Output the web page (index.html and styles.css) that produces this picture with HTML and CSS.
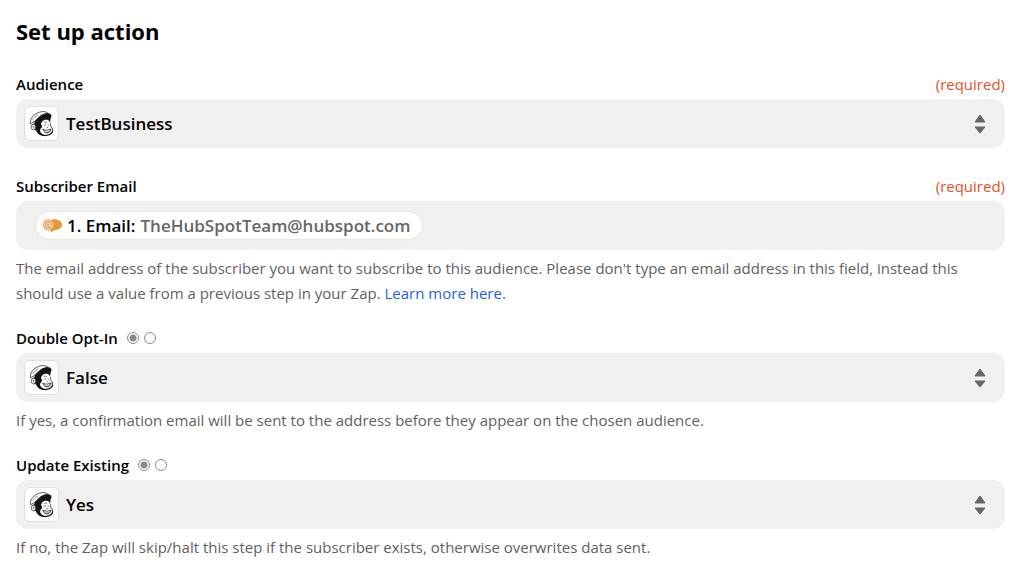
FILE: index.html
```html
<!DOCTYPE html>
<html lang="en">
<head>
<meta charset="utf-8">
<meta name="viewport" content="width=device-width, initial-scale=1">
<title>Set up action</title>
<link rel="stylesheet" href="styles.css">
</head>
<body>
<svg class="sprite" aria-hidden="true">
  <symbol id="monkey" viewBox="1 0 102 102">
    <path fill="#151515" d="M31 42C38 33 48 28 60 26L78 32C81 36 80 42 78 47C81 50 82 55 82 60C87 64 90 72 87 79C82 87 71 91 60 90C48 90 38 82 35 72C27 73 21 68 21 61C20 56 24 52 30 51Z"/>
    <path fill="#fff" d="M53 46C59 38 72 38 76 44C79 49 80 55 80 61C86 66 87 71 84 76C79 84 70 87 62 86C51 84 46 76 48 70C50 64 56 63 53 57C50 54 50 50 53 46Z"/>
    <path fill="#fff" stroke="#333" stroke-width="2.5" d="M18 52C15 35 29 21 46 16C57 12 68 15 73 20C58 21 44 28 33 42C28 47 24 49 18 52Z"/>
    <path fill="#151515" d="M45 31C52 22 67 17 77 20C85 23 84 30 79 36C71 32 59 31 48 37Z"/>
    <ellipse cx="27" cy="62" rx="7" ry="9" fill="#ddd" stroke="#444" stroke-width="2"/>
    <path fill="none" stroke="#666" stroke-width="2" d="M25 61q4-4 4 4M24 39q7-11 18-15"/>
    <path fill="none" stroke="#333" stroke-width="2" d="M60 48q5-3 9 0M59 56q4-2 7 0M71 55l4 1M68 63l5 1"/>
    <path fill="#888" stroke="#151515" stroke-width="2" d="M56 68C64 74 74 71 82 68C80 77 74 80 67 80C61 79 58 74 56 68Z"/>
    <path fill="none" stroke="#fff" stroke-width="3" d="M61 74q8 2 15-1"/>
  </symbol>
</svg>
<main class="panel">
  <h1 class="title">Set up action</h1>
  <form class="form">
    <section class="field">
      <div class="head"><label class="label" for="audience">Audience</label><span class="required">(required)</span></div>
      <div class="control">
        <span class="app"><svg class="art"><use href="#monkey"/></svg></span>
        <select class="select" id="audience"><option>TestBusiness</option></select>
      </div>
    </section>
    <section class="field">
      <div class="head"><label class="label" for="email">Subscriber Email</label><span class="required">(required)</span></div>
      <div class="control token-box">
        <span class="token">
          <svg class="bubble" viewBox="0 0 54 42" aria-hidden="true">
            <path fill="#e8963c" d="M24 5C37 0 54 7 54 19C54 29 43 34 32 34L21 42L23 33C18 30 15 25 15 20C15 14 18 10 24 5Z"/>
            <circle cx="16" cy="19" r="16" fill="#e8963c"/>
            <circle cx="16" cy="19" r="12" fill="none" stroke="#fff" stroke-width="2.5"/>
            <circle cx="15" cy="19" r="5" fill="none" stroke="#fff" stroke-width="2.5"/>
            <path fill="none" stroke="#fff" stroke-width="2.5" d="M20 13v8q3 5 7 1"/>
          </svg>
          <span class="token-name">1. Email:</span>
          <span>TheHubSpotTeam@hubspot.com</span>
        </span>
        <input class="text" id="email" type="text">
      </div>
      <p class="help">The email address of the subscriber you want to subscribe to this audience. Please don't type an email address in this field, instead this should use a value from a previous step in your Zap. <a class="link" href="#">Learn more here.</a></p>
    </section>
    <section class="field">
      <div class="head">
        <label class="label" for="optin">Double Opt-In</label>
        <span class="radios"><input class="radio" type="radio" name="optin-mode" aria-label="Choose value" checked><input class="radio" type="radio" name="optin-mode" aria-label="Custom value"></span>
      </div>
      <div class="control">
        <span class="app"><svg class="art"><use href="#monkey"/></svg></span>
        <select class="select" id="optin"><option>False</option></select>
      </div>
      <p class="help">If yes, a confirmation email will be sent to the address before they appear on the chosen audience.</p>
    </section>
    <section class="field">
      <div class="head">
        <label class="label" for="update">Update Existing</label>
        <span class="radios"><input class="radio" type="radio" name="update-mode" aria-label="Choose value" checked><input class="radio" type="radio" name="update-mode" aria-label="Custom value"></span>
      </div>
      <div class="control">
        <span class="app"><svg class="art"><use href="#monkey"/></svg></span>
        <select class="select" id="update"><option>Yes</option></select>
      </div>
      <p class="help">If no, the Zap will skip/halt this step if the subscriber exists, otherwise overwrites data sent.</p>
    </section>
  </form>
</main>
</body>
</html>
```
FILE: styles.css
```css
* { box-sizing: border-box; }
body {
  margin: 0;
  background: #fff;
  color: #000;
  font-family: "Open Sans", "Noto Sans", sans-serif;
  font-size: 15px;
}
.sprite { display: none; }
.panel { padding: 15px 19px 0 16px; }
.title {
  margin: 0 0 23px;
  font-size: 22px;
  line-height: 32px;
  font-weight: 700;
}
.field { margin-bottom: 24px; }
.field:has(.help) { margin-bottom: 18px; }
.head {
  display: flex;
  align-items: center;
  height: 29px;
  padding-bottom: 2px;
}
.label { font-weight: 600; }
.required { margin-left: auto; color: #e8501f; }
.radios { display: flex; gap: 5px; margin-left: 9px; }
.radio {
  appearance: none;
  width: 12px;
  height: 12px;
  margin: 0;
  border: 1px solid #8c8c8c;
  border-radius: 50%;
  background: #fff;
}
.radio:checked { background: radial-gradient(circle, #888 0 3px, #fff 4px); }
.control {
  display: grid;
  grid-template-columns: 50px 1fr;
  align-items: center;
  height: 49px;
  border-radius: 12px;
  background: #f0f0f0;
}
.app {
  z-index: 1;
  grid-area: 1 / 1;
  display: flex;
  width: 35px;
  height: 35px;
  margin-left: 8px;
  border: 1px solid #dcdfe3;
  border-radius: 6px;
  background: #fff;
  pointer-events: none;
}
.art { width: 100%; height: 100%; }
.select {
  appearance: none;
  grid-area: 1 / 1 / 2 / 3;
  width: 100%;
  height: 100%;
  padding: 0 50px;
  border: 0;
  border-radius: 12px;
  background: url("data:image/svg+xml,%3Csvg xmlns='http://www.w3.org/2000/svg' width='12' height='20' fill='%23666' stroke='%23666' stroke-linejoin='round'%3E%3Cpath d='M6 1l5 7H1zM6 19l5-6H1z'/%3E%3C/svg%3E") right 19px center no-repeat;
  color: #000;
  font: 600 17px "Open Sans", "Noto Sans", sans-serif;
}
.token-box {
  display: flex;
  gap: 8px;
  padding: 0 20px;
}
.token {
  display: flex;
  align-items: center;
  gap: 5px;
  height: 27px;
  padding: 0 12px 0 7px;
  border-radius: 14px;
  background: #fff;
  box-shadow: 0 0 2px #ccc;
  color: #666;
  font-size: 17px;
  font-weight: 600;
}
.token-name { color: #000; }
.bubble { flex: none; width: 19px; height: 15px; }
.text {
  flex: 1;
  min-width: 0;
  border: 0;
  outline: 0;
  background: transparent;
  font: inherit;
}
.help {
  margin: 0;
  padding-top: 6px;
  line-height: 25px;
  color: #5f5f5f;
}
.link { color: #1f5fe8; text-decoration: none; }
```
